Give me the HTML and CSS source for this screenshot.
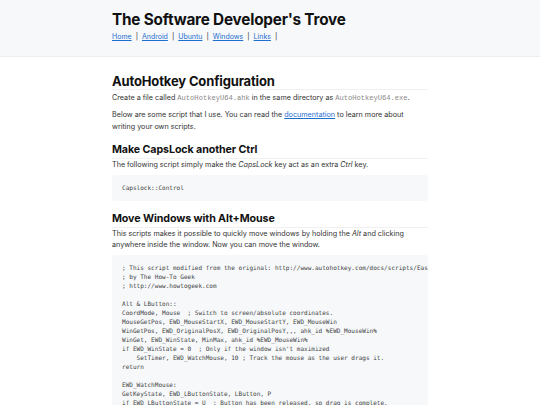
FILE: index.html
```html
<!DOCTYPE html>
<html>
<head>
<meta charset="utf-8">
<link rel="stylesheet" href="styles.css">
</head>
<body>
<header class="site-header">
  <div class="container">
    <h1 class="site-title">The Software Developer's Trove</h1>
    <nav class="nav">
      <a href="#">Home</a><span class="sep">|</span><a href="#">Android</a><span class="sep">|</span><a href="#">Ubuntu</a><span class="sep">|</span><a href="#">Windows</a><span class="sep">|</span><a href="#">Links</a><span class="sep">|</span>
    </nav>
  </div>
</header>
<main class="container content">
  <h2 class="h2">AutoHotkey Configuration</h2>
  <p>Create a file called <code class="inline">AutoHotkeyU64.ahk</code> in the same directory as <code class="inline">AutoHotkeyU64.exe</code>.</p>
  <p>Below are some script that I use. You can read the <a href="#">documentation</a> to learn more about writing your own scripts.</p>
  <h3 class="h3">Make CapsLock another Ctrl</h3>
  <p>The following script simply make the <em>CapsLock</em> key act as an extra <em>Ctrl</em> key.</p>
  <pre class="code"><code>Capslock::Control</code></pre>
  <h3 class="h3">Move Windows with Alt+Mouse</h3>
  <p>This scripts makes it possible to quickly move windows by holding the <em>Alt</em> and clicking anywhere inside the window. Now you can move the window.</p>
  <pre class="code"><code>; This script modified from the original: http://www.autohotkey.com/docs/scripts/EasyWindowDrag.htm
; by The How-To Geek
; http://www.howtogeek.com

Alt &amp; LButton::
CoordMode, Mouse  ; Switch to screen/absolute coordinates.
MouseGetPos, EWD_MouseStartX, EWD_MouseStartY, EWD_MouseWin
WinGetPos, EWD_OriginalPosX, EWD_OriginalPosY,,, ahk_id %EWD_MouseWin%
WinGet, EWD_WinState, MinMax, ahk_id %EWD_MouseWin%
if EWD_WinState = 0  ; Only if the window isn't maximized
    SetTimer, EWD_WatchMouse, 10 ; Track the mouse as the user drags it.
return

EWD_WatchMouse:
GetKeyState, EWD_LButtonState, LButton, P
if EWD_LButtonState = U  ; Button has been released, so drag is complete.
{
    SetTimer, EWD_WatchMouse, off
    return
}</code></pre>
</main>
</body>
</html>
```
FILE: styles.css
```css
* { box-sizing: border-box; }
html, body { margin: 0; padding: 0; background: #fff; }
body {
  font-family: Inter, "Noto Sans", sans-serif;
  font-size: 7.2px;
  line-height: 11.5px;
  color: #333;
}
.container {
  width: 316px;
  margin: 0 auto;
}
.site-header {
  background: #f6f8fa;
  border-bottom: 1px solid #eceef0;
  padding: 11px 0 14px;
}
.site-title {
  margin: 0;
  font-size: 15.3px;
  line-height: 18px;
  font-weight: 700;
  color: #111;
  letter-spacing: -0.2px;
}
.nav {
  margin-top: 3px;
  font-size: 7px;
  line-height: 10px;
  color: #222;
}
a { color: #1f6fd0; text-decoration: underline; }
.nav .sep { margin: 0 4px; }
.content { padding-top: 16px; }
.h2 {
  margin: 0 0 2px;
  font-size: 13px;
  line-height: 16px;
  font-weight: 700;
  color: #111;
  letter-spacing: -0.15px;
  padding-bottom: 0;
  border-bottom: 1px solid #f0f0f0;
}
.h3 {
  margin: 11px 0 0;
  font-size: 10.7px;
  line-height: 14px;
  font-weight: 700;
  color: #111;
  letter-spacing: -0.1px;
  padding-bottom: 1px;
  border-bottom: 1px solid #f0f0f0;
}
p { margin: 0 0 4.5px; }
code.inline {
  font-family: "Liberation Mono", monospace;
  font-size: 7.1px;
  color: #8a8a8a;
}
em { font-style: italic; }
.code {
  margin: 4.5px 0 0;
  background: #f6f8fa;
  border-radius: 3px;
  padding: 8px 10px 8.5px;
  overflow: hidden;
  white-space: pre;
  font-family: "DejaVu Sans Mono", monospace;
  font-size: 6.05px;
  line-height: 9px;
}
.code code {
  font-family: "DejaVu Sans Mono", monospace;
  color: #444;
  font-size: 6.05px;
}
```
